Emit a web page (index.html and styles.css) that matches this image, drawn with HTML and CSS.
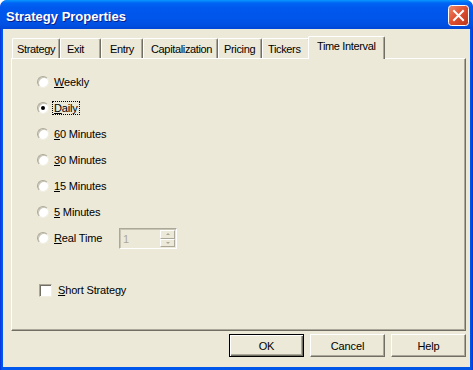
FILE: index.html
```html
<!DOCTYPE html>
<html lang="en">
<head>
  <meta charset="UTF-8" />
  <title>Strategy Properties</title>
  <link rel="stylesheet" href="styles.css">
</head>
<body>
  <div class="window">
    <div class="titlebar">
      <span class="title">Strategy Properties</span>
      <span class="close">
        <svg width="21" height="21" viewBox="0 0 21 21">
          <defs>
            <linearGradient id="cg" x1="0" y1="0" x2="1" y2="1">
              <stop offset="0" stop-color="#F08A6C"/>
              <stop offset="0.5" stop-color="#DE4E2E"/>
              <stop offset="1" stop-color="#B8351A"/>
            </linearGradient>
          </defs>
          <rect x="0.5" y="0.5" width="20" height="20" rx="3" fill="url(#cg)" stroke="#fff"/>
          <path d="M6 6 L15 15 M15 6 L6 15" stroke="#fff" stroke-width="2" stroke-linecap="square"/>
        </svg>
      </span>
    </div>

    <div class="client">
      <div class="tabs">
        <div class="tab t-strategy">Strategy</div>
        <div class="tab t-exit">Exit</div>
        <div class="tab t-entry">Entry</div>
        <div class="tab t-cap">Capitalization</div>
        <div class="tab t-pricing">Pricing</div>
        <div class="tab t-tickers">Tickers</div>
        <div class="tab active">Time Interval</div>
      </div>

      <div class="panel">
        <div class="options">
          <div class="opt"><span class="radio"></span><span><u>W</u>eekly</span></div>
          <div class="opt"><span class="radio checked"></span><span class="focus"><u>D</u>aily</span></div>
          <div class="opt"><span class="radio"></span><span><u>6</u>0 Minutes</span></div>
          <div class="opt"><span class="radio"></span><span><u>3</u>0 Minutes</span></div>
          <div class="opt"><span class="radio"></span><span><u>1</u>5 Minutes</span></div>
          <div class="opt"><span class="radio"></span><span><u>5</u> Minutes</span></div>
          <div class="opt">
            <span class="radio"></span><span class="rt-label"><u>R</u>eal Time</span>
            <div class="spin">
              <span class="spin-text">1</span>
              <div class="spin-btns">
                <span class="spin-btn"><span class="arrow up"></span></span>
                <span class="spin-btn"><span class="arrow down"></span></span>
              </div>
            </div>
          </div>
        </div>
        <div class="opt check-row"><span class="check"></span><span><u>S</u>hort Strategy</span></div>
      </div>

      <div class="buttons">
        <div class="btn default">OK</div>
        <div class="btn">Cancel</div>
        <div class="btn">Help</div>
      </div>
    </div>
  </div>
</body>
</html>
```

FILE: styles.css
```css
body {
  margin: 0;
  background: #fff;
  font-family: 'Liberation Sans', Arial, sans-serif;
  font-size: 11px;
  letter-spacing: -0.15px;
  color: #000;
}

.window {
  width: 473px;
  height: 370px;
  background: linear-gradient(to right, #0831D9 0px, #0058EE 2px, #0055E5 471px, #0831D9 473px);
  border-radius: 7px 7px 0 0;
  display: flex;
  flex-direction: column;
  overflow: hidden;
}

.titlebar {
  height: 29px;
  flex: none;
  display: flex;
  align-items: center;
  justify-content: space-between;
  padding: 0 4px 0 6px;
  background: linear-gradient(to bottom, #0997FF 0px, #0064F4 3px, #0058EE 8px, #0055EA 18px, #0050E2 25px, #0046D6 29px);
  border-radius: 7px 7px 0 0;
}

.title {
  color: #fff;
  font-weight: bold;
  font-size: 13px;
  letter-spacing: 0;
  text-shadow: 1px 1px 0 #0A1E8C;
  padding-top: 3px;
}

.close {
  display: flex;
  margin-top: 2px;
}

.client {
  flex: 1;
  margin: 0 3px 3px;
  background: #ECE9D8;
  padding-top: 7px;
  display: flex;
  flex-direction: column;
}

.tabs {
  display: flex;
  align-items: flex-end;
  height: 22px;
  padding-left: 9px;
  position: relative;
  z-index: 1;
}

.tab {
  box-sizing: border-box;
  height: 20px;
  padding: 4px 0 0 6px;
  border-top: 1px solid #fff;
  border-left: 1px solid #fff;
  border-right: 1px solid #716F64;
  box-shadow: inset -1px 0 0 #ACA899;
  border-radius: 2px 2px 0 0;
  white-space: nowrap;
  letter-spacing: -0.35px;
}

.t-strategy { width: 48px; padding-left: 4px; }
.t-exit { width: 41px; }
.t-entry { width: 42px; padding-left: 8px; }
.t-cap { width: 75px; padding-left: 7px; }
.t-pricing { width: 44px; padding-left: 5px; }
.t-tickers { width: 48px; padding-left: 5px; }

.tab.active {
  width: 77px;
  height: 23px;
  margin: 0 0 -1px -2px;
  padding: 3px 0 0 8px;
  background: #ECE9D8;
}

.panel {
  box-sizing: border-box;
  height: 273px;
  margin: 0 4px 0 8px;
  border-top: 1px solid #fff;
  border-left: 1px solid #fff;
  border-right: 1px solid #716F64;
  border-bottom: 1px solid #716F64;
  box-shadow: inset -1px -1px 0 #ACA899;
  padding: 15px 0 0 25px;
}

.options {
  display: flex;
  flex-direction: column;
  gap: 10px;
}

.opt {
  display: flex;
  align-items: center;
  height: 16px;
}

.radio {
  box-sizing: border-box;
  width: 12px;
  height: 12px;
  border-radius: 50%;
  background: #fff;
  border: 1px solid;
  border-color: #ACA899 #F1EFE2 #F1EFE2 #ACA899;
  box-shadow: inset 1px 1px 0 #C8C5B5;
  margin-right: 5px;
  display: flex;
  align-items: center;
  justify-content: center;
}

.radio.checked::after {
  content: "";
  width: 4px;
  height: 4px;
  border-radius: 50%;
  background: #000;
}

.focus {
  outline: 1px dotted #000;
  outline-offset: 0;
  padding: 0 1px;
  margin-left: -1px;
}

.rt-label {
  width: 65px;
}

.spin {
  box-sizing: border-box;
  width: 58px;
  height: 21px;
  margin: -2px 0 -3px;
  display: flex;
  align-items: center;
  justify-content: space-between;
  border: 1px solid;
  border-color: #ACA899 #fff #fff #ACA899;
  box-shadow: inset 1px 1px 0 #C8C5B5;
  padding: 1px 1px 1px 3px;
  color: #ACA899;
}

.spin-btns {
  display: flex;
  flex-direction: column;
  height: 17px;
}

.spin-btn {
  box-sizing: border-box;
  width: 15px;
  height: 8.5px;
  border: 1px solid;
  border-color: #fff #ACA899 #ACA899 #fff;
  display: flex;
  align-items: center;
  justify-content: center;
}

.arrow {
  width: 0;
  height: 0;
  border-left: 2px solid transparent;
  border-right: 2px solid transparent;
}

.arrow.up { border-bottom: 2px solid #ACA899; }
.arrow.down { border-top: 2px solid #ACA899; }

.check-row {
  margin-top: 36px;
  padding-left: 2px;
}

.check {
  box-sizing: border-box;
  width: 13px;
  height: 13px;
  background: #fff;
  border: 1px solid;
  border-color: #ACA899 #F1EFE2 #F1EFE2 #ACA899;
  box-shadow: inset 1px 1px 0 #716F64;
  margin-right: 6px;
}

.buttons {
  display: flex;
  justify-content: flex-end;
  gap: 6px;
  margin-top: 3px;
  padding-right: 4px;
}

.btn {
  box-sizing: border-box;
  width: 75px;
  height: 23px;
  display: flex;
  align-items: center;
  justify-content: center;
  border: 1px solid;
  border-color: #fff #716F64 #716F64 #fff;
  box-shadow: inset -1px -1px 0 #ACA899;
}

.btn.default {
  border: 1px solid #000;
  box-shadow: inset 1px 1px 0 #fff, inset -1px -1px 0 #716F64, inset -2px -2px 0 #ACA899;
}
```
